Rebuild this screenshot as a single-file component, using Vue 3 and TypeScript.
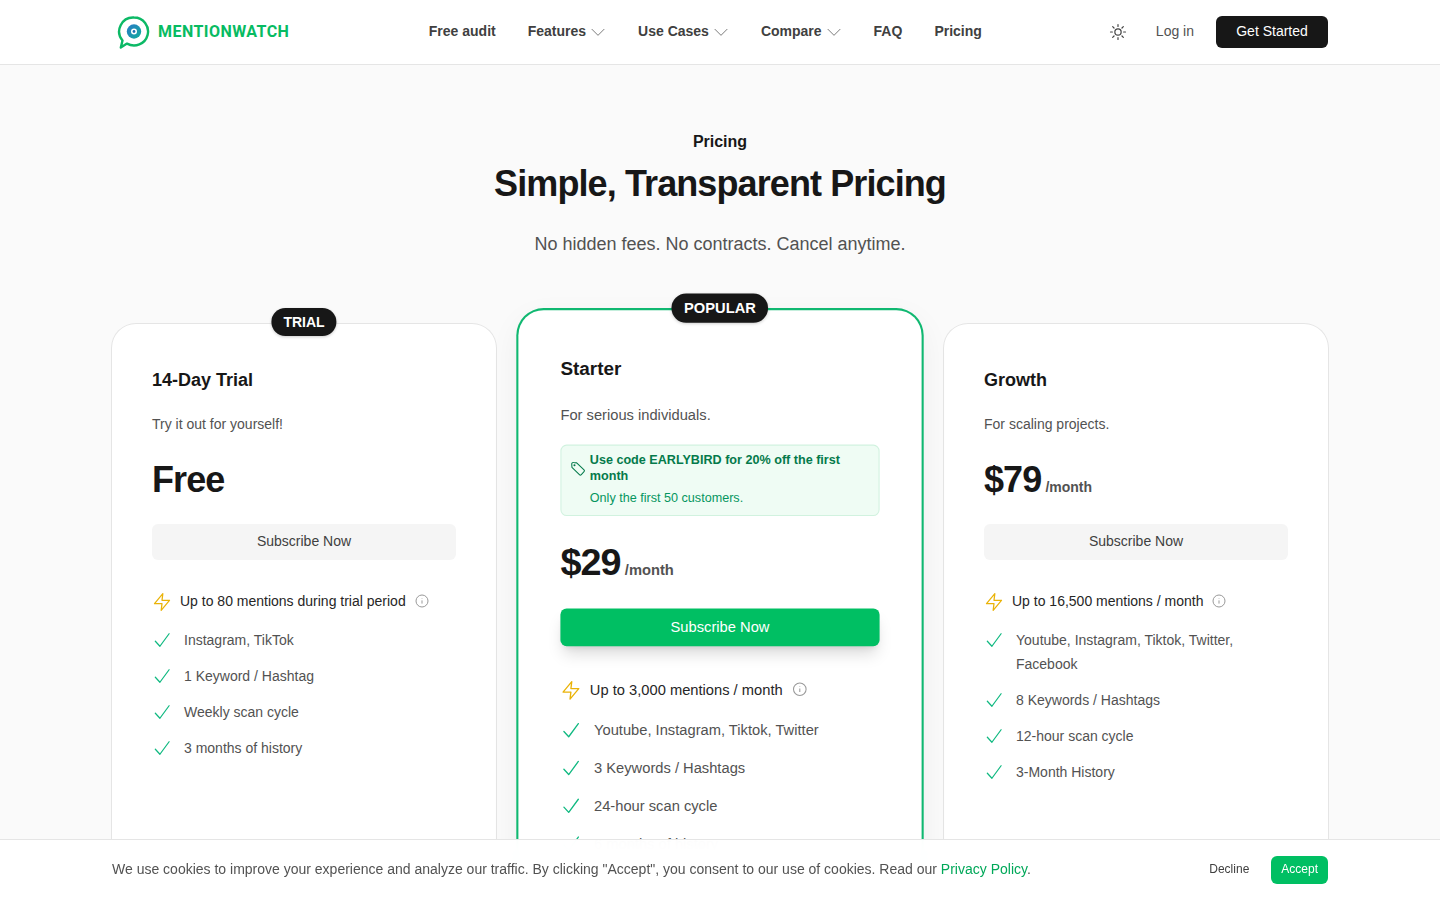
<template>
  <header class="site-header">
    <div class="header-inner">
      <a class="logo" href="#">
        <svg width="34" height="34" viewBox="0 0 34 34" fill="none">
          <defs>
            <linearGradient id="eye" x1="0" y1="0" x2="1" y2="1">
              <stop offset="0" stop-color="#2a78c8" />
              <stop offset="1" stop-color="#0fae9a" />
            </linearGradient>
          </defs>
          <path d="M17 2.5a14 14 0 1 1-7 26.1L3.8 32.6l1.7-7.1A14 14 0 0 1 17 2.5Z" stroke="#0cb966" stroke-width="2.4" stroke-linejoin="round" />
          <circle cx="17" cy="16.5" r="7.2" fill="url(#eye)" />
          <circle cx="17" cy="16.5" r="3" fill="#fff" />
          <circle cx="17" cy="16.5" r="1.4" fill="#1b6fb0" />
        </svg>
        <span>MENTIONWATCH</span>
      </a>
      <nav class="main-nav">
        <a v-for="item in navItems" :key="item.label" href="#">
          {{ item.label }}
          <svg v-if="item.menu" width="16" height="16" viewBox="0 0 24 24" fill="none" stroke="#666" stroke-width="1.3" stroke-linecap="round" stroke-linejoin="round"><path d="m3 8 9 9 9-9" /></svg>
        </a>
      </nav>
      <div class="header-actions">
        <svg class="sun" width="18" height="18" viewBox="0 0 24 24" fill="none" stroke="#444" stroke-width="1.6" stroke-linecap="round"><circle cx="12" cy="12" r="4.2" /><path d="M12 2v2.5M12 19.5V22M4.9 4.9l1.8 1.8M17.3 17.3l1.8 1.8M2 12h2.5M19.5 12H22M4.9 19.1l1.8-1.8M17.3 6.7l1.8-1.8" /></svg>
        <a class="login" href="#">Log in</a>
        <a class="get-started" href="#">Get Started</a>
      </div>
    </div>
  </header>

  <main class="pricing">
    <p class="eyebrow">Pricing</p>
    <h1>Simple, Transparent Pricing</h1>
    <p class="lead">No hidden fees. No contracts. Cancel anytime.</p>

    <div class="plans">
      <article v-for="plan in plans" :key="plan.name" class="plan" :class="{ featured: plan.featured }">
        <span v-if="plan.badge" class="badge">{{ plan.badge }}</span>
        <h2>{{ plan.name }}</h2>
        <p class="desc">{{ plan.desc }}</p>
        <div v-if="plan.featured" class="promo">
          <svg width="16" height="16" viewBox="0 0 16 16" fill="none" stroke="#047a4b" stroke-width="1" stroke-linejoin="round"><path d="M1.8 3.6a1.4 1.4 0 0 1 1.6-1.5l3.1.3 7 6.6a1.3 1.3 0 0 1 0 1.8l-2.6 2.8a1.3 1.3 0 0 1-1.8 0L2 6.7Z" /><circle cx="4.4" cy="4.6" r=".5" /></svg>
          <div>
            <strong>Use code EARLYBIRD for 20% off the first month</strong>
            <span>Only the first 50 customers.</span>
          </div>
        </div>
        <div class="price">
          <b>{{ plan.price }}</b>
          <span v-if="plan.period">{{ plan.period }}</span>
        </div>
        <a class="subscribe" href="#">Subscribe Now</a>
        <div class="quota">
          <svg class="bolt" width="20" height="20" viewBox="0 0 24 24" fill="none" stroke="#eab308" stroke-width="1.5" stroke-linecap="round" stroke-linejoin="round"><path d="M13 2 3 14h9l-1 8 10-12h-9l1-8z" /></svg>
          <span>{{ plan.quota }}</span>
          <svg class="info" width="14" height="14" viewBox="0 0 14 14" fill="none" stroke="#999" stroke-width="1"><circle cx="7" cy="7" r="6" /><path d="M7 6.4v3.2M7 4.3v.5" /></svg>
        </div>
        <ul>
          <li v-for="feature in plan.features" :key="feature">
            <svg width="20" height="20" viewBox="0 0 24 24" fill="none" stroke="#10b981" stroke-width="1.5" stroke-linecap="round" stroke-linejoin="round"><path d="M4 13.5 9.5 19.5 20.5 4.5" /></svg>
            <span>{{ feature }}</span>
          </li>
        </ul>
      </article>
    </div>
  </main>

  <aside class="cookie-bar">
    <p>We use cookies to improve your experience and analyze our traffic. By clicking "Accept", you consent to our use of cookies. Read our <a href="#">Privacy Policy</a>.</p>
    <div class="cookie-actions">
      <button class="decline" type="button">Decline</button>
      <button class="accept" type="button">Accept</button>
    </div>
  </aside>
</template>

<script setup lang="ts">
interface Plan {
  name: string;
  desc: string;
  price: string;
  period?: string;
  badge?: string;
  featured?: boolean;
  quota: string;
  features: string[];
}

const navItems = [
  { label: "Free audit", menu: false },
  { label: "Features", menu: true },
  { label: "Use Cases", menu: true },
  { label: "Compare", menu: true },
  { label: "FAQ", menu: false },
  { label: "Pricing", menu: false },
];

const plans: Plan[] = [
  {
    name: "14-Day Trial",
    desc: "Try it out for yourself!",
    price: "Free",
    badge: "TRIAL",
    quota: "Up to 80 mentions during trial period",
    features: ["Instagram, TikTok", "1 Keyword / Hashtag", "Weekly scan cycle", "3 months of history"],
  },
  {
    name: "Starter",
    desc: "For serious individuals.",
    price: "$29",
    period: "/month",
    badge: "POPULAR",
    featured: true,
    quota: "Up to 3,000 mentions / month",
    features: ["Youtube, Instagram, Tiktok, Twitter", "3 Keywords / Hashtags", "24-hour scan cycle", "6 months of history"],
  },
  {
    name: "Growth",
    desc: "For scaling projects.",
    price: "$79",
    period: "/month",
    quota: "Up to 16,500 mentions / month",
    features: ["Youtube, Instagram, Tiktok, Twitter, Facebook", "8 Keywords / Hashtags", "12-hour scan cycle", "3-Month History"],
  },
];
</script>

<style>
body {
  background: #fafafa;
}
</style>

<style scoped>
* {
  box-sizing: border-box;
}

a {
  text-decoration: none;
  color: inherit;
}

.site-header {
  height: 65px;
  background: #fff;
  border-bottom: 1px solid #e5e5e5;
  font-family: "Liberation Sans", Arial, sans-serif;
}

.header-inner {
  width: 1216px;
  height: 64px;
  margin: 0 auto;
  display: flex;
  align-items: center;
  position: relative;
}

.logo {
  display: flex;
  align-items: center;
  gap: 7px;
  margin-left: 5px;
}

.logo span {
  font-family: Roboto, sans-serif;
  font-weight: 700;
  font-size: 16px;
  letter-spacing: 0.45px;
  color: #07bb62;
  padding-bottom: 2px;
}

.main-nav {
  display: flex;
  gap: 32px;
  margin-left: 139.5px;
  font-size: 14px;
  font-weight: 700;
  color: #404040;
}

.main-nav a {
  display: flex;
  align-items: center;
  gap: 4px;
  padding-bottom: 2px;
}

.main-nav svg {
  margin-top: 2px;
}

.header-actions {
  margin-left: auto;
  display: flex;
  align-items: center;
  font-size: 14px;
}

.sun {
  margin-right: 29px;
}

.login {
  color: #525252;
  margin-right: 22px;
  padding-bottom: 2px;
}

.get-started {
  width: 112px;
  height: 32px;
  padding-bottom: 2px;
  border-radius: 6px;
  background: #171717;
  color: #fff;
  display: flex;
  align-items: center;
  justify-content: center;
}

.pricing {
  width: 1216px;
  margin: 0 auto;
  padding-top: 65px;
  font-family: "Liberation Sans", Arial, sans-serif;
  text-align: center;
  color: #171717;
}

.eyebrow {
  margin: 0;
  font-size: 16px;
  line-height: 24px;
  font-weight: 700;
}

h1 {
  margin: 6px 0 0;
  font-size: 36px;
  line-height: 48px;
  font-weight: 700;
  letter-spacing: -0.9px;
}

.lead {
  margin: 22px 0 0;
  font-size: 18px;
  line-height: 28px;
  color: #525252;
}

.plans {
  display: grid;
  grid-template-columns: repeat(3, 1fr);
  gap: 32px;
  margin-top: 66px;
  text-align: left;
}

.plan {
  position: relative;
  padding: 40px 40px 32px;
  border-radius: 24px;
  background: #fff;
  box-shadow: 0 0 0 1px #e5e5e5;
}

.plan.featured {
  transform: scale(1.05);
  box-shadow: 0 0 0 2px #10b871, 0 10px 30px rgba(0, 0, 0, 0.06);
  z-index: 1;
}

.badge {
  position: absolute;
  top: -16px;
  left: 50%;
  transform: translateX(-50%);
  padding: 4px 12px;
  border-radius: 999px;
  background: #171717;
  color: #fff;
  font-size: 14px;
  line-height: 20px;
  font-weight: 700;
  box-shadow: 0 1px 3px rgba(0, 0, 0, 0.2);
}

h2 {
  margin: 2px 0 0;
  font-size: 18px;
  line-height: 28px;
  font-weight: 700;
}

.desc {
  margin: 20px 0 0;
  font-size: 14px;
  line-height: 20px;
  color: #525252;
}

.promo {
  display: flex;
  align-items: flex-start;
  gap: 3px;
  margin-top: 18px;
  padding: 5px 8px 7px;
  min-height: 68px;
  border: 1px solid #d1f2df;
  border-radius: 6px;
  background: #effcf4;
  font-size: 12px;
  line-height: 16px;
}

.promo svg {
  flex: none;
  margin-top: 9px;
}

.promo strong {
  display: block;
  line-height: 16.3px;
  color: #047a4b;
}

.promo span {
  display: block;
  margin-top: 4px;
  color: #059660;
}

.price {
  margin-top: 24px;
  height: 40px;
  display: flex;
  align-items: center;
  gap: 4px;
}

.plan:not(.featured) .price {
  margin-top: 26px;
}

.price b {
  font-size: 36px;
  letter-spacing: -0.9px;
}

.price span {
  margin-top: 14px;
  font-size: 14px;
  font-weight: 700;
  color: #525252;
}

.subscribe {
  display: flex;
  align-items: center;
  justify-content: center;
  height: 36px;
  margin-top: 24px;
  padding-bottom: 2px;
  border-radius: 6px;
  background: #f5f5f5;
  color: #404040;
  font-size: 14px;
}

.featured .subscribe {
  padding-bottom: 3px;
  background: #00bf63;
  color: #fff;
  box-shadow: 0 10px 15px -3px rgba(0, 0, 0, 0.15), 0 4px 6px -4px rgba(0, 0, 0, 0.1);
}

.quota {
  display: flex;
  align-items: center;
  height: 24px;
  gap: 8px;
  margin-top: 29px;
  font-size: 14px;
  color: #262626;
}

.bolt {
  margin-top: 2px;
}

.info {
  margin-left: 1px;
}

ul {
  list-style: none;
  margin: 15px 0 0;
  padding: 0;
  display: flex;
  flex-direction: column;
  gap: 12px;
}

li {
  display: flex;
  gap: 12px;
  font-size: 14px;
  line-height: 24px;
  color: #525252;
}

li svg {
  flex: none;
  margin-top: 2px;
}

.cookie-bar {
  position: fixed;
  left: 0;
  right: 0;
  bottom: 0;
  z-index: 10;
  height: 61px;
  padding: 0 112px;
  display: flex;
  align-items: center;
  justify-content: space-between;
  background: rgba(255, 255, 255, 0.97);
  backdrop-filter: blur(8px);
  border-top: 1px solid #e5e5e5;
  font-family: "Liberation Sans", Arial, sans-serif;
}

.cookie-bar p {
  margin: 0 0 2px;
  font-size: 14px;
  line-height: 20px;
  color: #525252;
}

.cookie-bar p a {
  color: #00a859;
}

.cookie-actions {
  display: flex;
  align-items: center;
  gap: 11px;
}

.cookie-actions button {
  height: 28px;
  padding: 0 10px 2px;
  border: 0;
  border-radius: 6px;
  font: 12px "Liberation Sans", Arial, sans-serif;
}

.cookie-actions .decline {
  padding: 0 11px 2px;
  background: transparent;
  color: #404040;
}

.accept {
  background: #00bf63;
  color: #fff;
}
</style>
